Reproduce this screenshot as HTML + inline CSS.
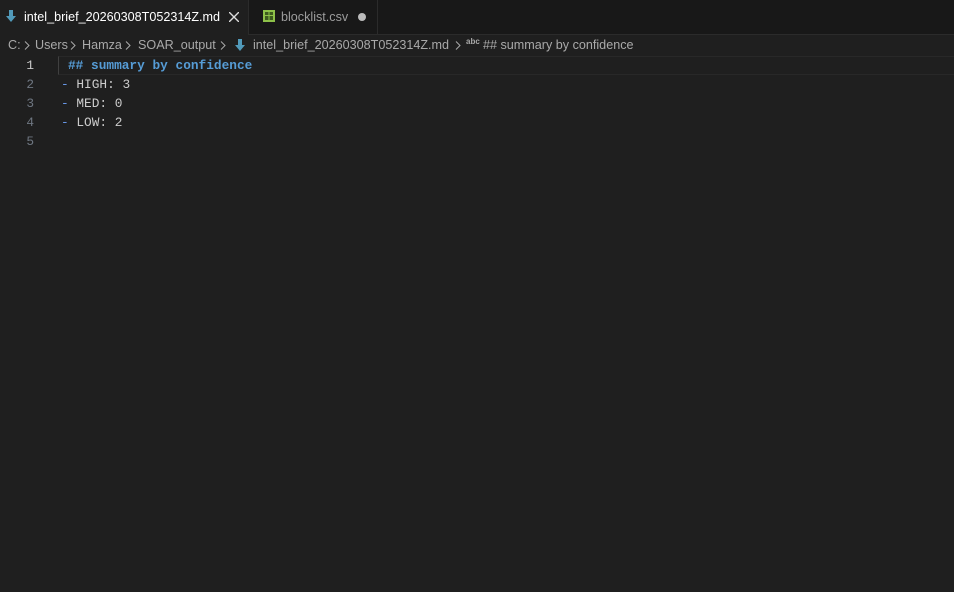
<!DOCTYPE html>
<html><head><style>
body{margin:0;width:954px;height:592px;background:#1f1f1f;overflow:hidden;font-family:"Liberation Sans",sans-serif;position:relative}
.tabs{position:absolute;top:0;left:0;width:954px;height:35px;background:#181818;border-bottom:1px solid #2b2b2b;box-sizing:border-box}
.tab{position:absolute;top:0;height:35px;font-size:12.6px;line-height:34px;box-sizing:border-box}
.t1{left:0;width:249px;height:35px;background:#1f1f1f;color:#fff;border-right:1px solid #2b2b2b}
.t2{left:249px;width:129px;color:#9d9d9d;border-right:1px solid #2b2b2b}
.bc{position:absolute;top:36px;left:0;width:954px;height:18px;font-size:12.6px;color:#a9a9a9;line-height:18px;white-space:nowrap}
.bc span{position:absolute;top:0}
.bc svg{position:absolute;top:5px}
.code{position:absolute;left:0;top:56px;font-family:"Liberation Mono",monospace;font-size:12.8px;line-height:19px}
.ln{position:absolute;width:34px;text-align:right;color:#6e7681}
.tx{position:absolute;left:61px;color:#ccc;white-space:pre}
.cur{position:absolute;left:58px;top:56px;width:896px;height:17px;border:1px solid #282828;border-left:1px solid #404040}
</style></head><body>
<div class="tabs">
<div class="tab t1"><svg style="position:absolute;left:6px;top:10px" width="10" height="12"><path d="M3 0h4v6h3L5 12 0 6h3z" fill="#519aba"/></svg><span style="position:absolute;left:24px;top:0">intel_brief_20260308T052314Z.md</span><svg style="position:absolute;left:229px;top:12px" width="10" height="10"><path d="M0 0L10 10M10 0L0 10" stroke="#ddd" stroke-width="1.4"/></svg></div>
<div class="tab t2"><svg style="position:absolute;left:14px;top:10px" width="12" height="12"><rect x="0" y="0" width="12" height="12" fill="#8dc149"/><path d="M2 2h8v8H2z" fill="#3c5a1e"/><path d="M2 5.5h8M6 2v8" stroke="#8dc149"/></svg><span style="position:absolute;left:32px;top:0">blocklist.csv</span><span style="position:absolute;left:109px;top:13px;width:8px;height:8px;border-radius:50%;background:#bbb"></span></div>
</div>
<div class="bc">
<span style="left:8px">C:</span>
<svg style="left:24px" width="6" height="9"><path d="M1 0.5L5 4.5 1 8.5" stroke="#aaa" fill="none"/></svg>
<span style="left:35px">Users</span>
<svg style="left:70px" width="6" height="9"><path d="M1 0.5L5 4.5 1 8.5" stroke="#aaa" fill="none"/></svg>
<span style="left:82px">Hamza</span>
<svg style="left:125px" width="6" height="9"><path d="M1 0.5L5 4.5 1 8.5" stroke="#aaa" fill="none"/></svg>
<span style="left:138px">SOAR_output</span>
<svg style="left:220px" width="6" height="9"><path d="M1 0.5L5 4.5 1 8.5" stroke="#aaa" fill="none"/></svg>
<svg style="left:235px;top:3px" width="10" height="12"><path d="M3 0h4v6h3L5 12 0 6h3z" fill="#519aba"/></svg>
<span style="left:253px">intel_brief_20260308T052314Z.md</span>
<svg style="left:455px" width="6" height="9"><path d="M1 0.5L5 4.5 1 8.5" stroke="#aaa" fill="none"/></svg>
<span style="left:466px;font-size:8px;font-weight:bold;top:-3px">abc</span>
<span style="left:483px">## summary by confidence</span>
</div>
<div class="cur"></div>
<div class="code">
<div class="ln" style="top:0;color:#ccc">1</div><div class="tx" style="top:0;left:68px;color:#569cd6;font-weight:bold">## summary by confidence</div>
<div class="ln" style="top:19px">2</div><div class="tx" style="top:19px"><span style="color:#6796e6">-</span> HIGH: 3</div>
<div class="ln" style="top:38px">3</div><div class="tx" style="top:38px"><span style="color:#6796e6">-</span> MED: 0</div>
<div class="ln" style="top:57px">4</div><div class="tx" style="top:57px"><span style="color:#6796e6">-</span> LOW: 2</div>
<div class="ln" style="top:76px">5</div>
</div>
</body></html>
